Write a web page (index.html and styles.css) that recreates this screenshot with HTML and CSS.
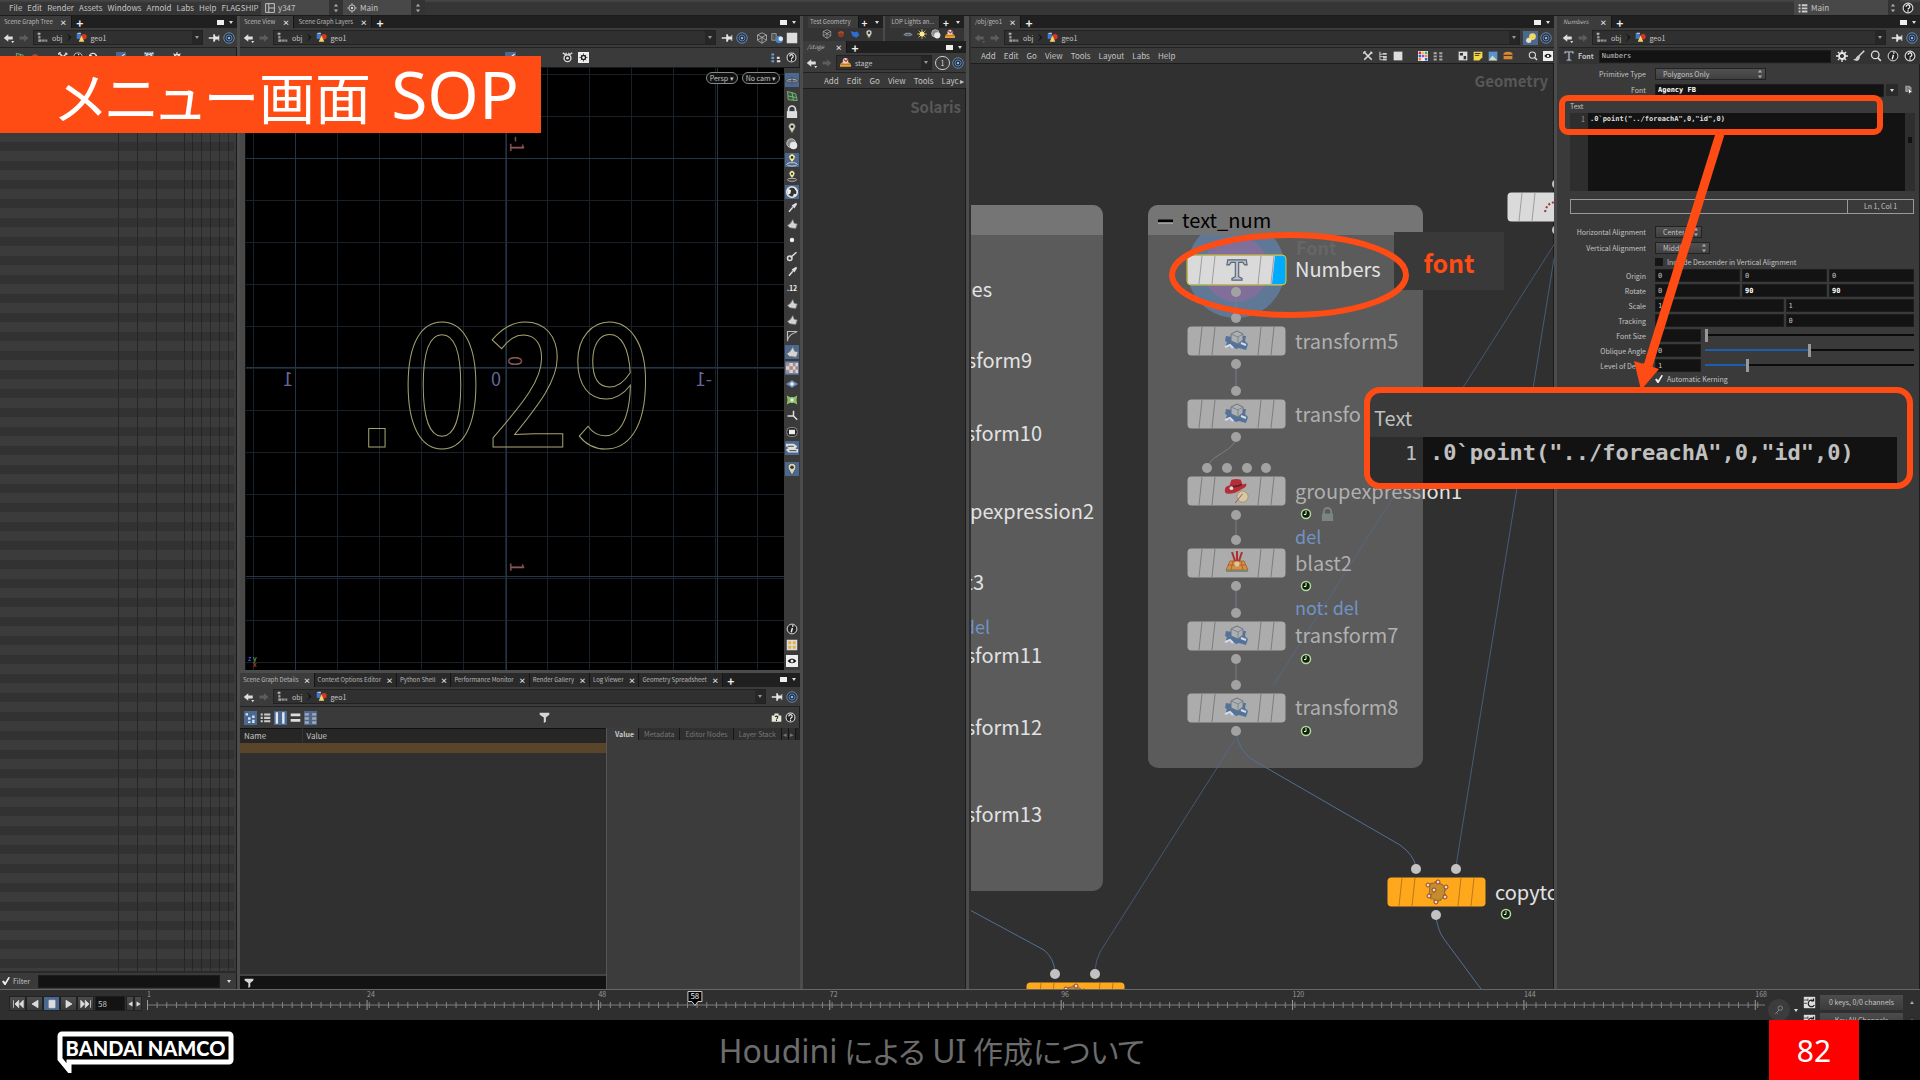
FILE: index.html
```html
<!DOCTYPE html>
<html lang="ja">
<head>
<meta charset="utf-8">
<title>メニュー画面 SOP</title>
<link rel="stylesheet" href="styles.css">
</head>
<body>
<svg class="defs" aria-hidden="true">
  <symbol id="back" viewBox="0 0 16 16"><path d="M1 8l6-5v3h6v4H7v3z" fill="currentColor"/><path d="M11 12h4l-2 3z" fill="currentColor"/></symbol>
  <symbol id="fwd" viewBox="0 0 16 16"><path d="M14 8L8 3v3H2v4h6v3z" fill="#5c5c5c"/></symbol>
  <symbol id="obj" viewBox="0 0 16 16"><path d="M1 1h4v3H1zM2 6h3v3H2zM2 11h4v3H2z" fill="#b8b8b8"/><path d="M7 11h4v3H7zM12 11h3v3h-3z" fill="#909090"/><path d="M3 4v8h9" stroke="#888" fill="none"/></symbol>
  <symbol id="geo" viewBox="0 0 16 16"><path d="M1 2h6v8H1z" fill="#3f78c8"/><path d="M1 2l2-1h4v2z" fill="#c8dcf5"/><circle cx="11.500" cy="7" r="4" fill="#d8371f"/><path d="M8 5l4 9H4z" fill="#f7d46a"/></symbol>
  <symbol id="pin" viewBox="0 0 16 16"><path d="M1 7h6V3h2l1 3h4V4h1v8h-1v-2h-4l-1 3H7V9H1z" fill="#e6e6e6"/></symbol>
  <symbol id="ring" viewBox="0 0 16 16"><circle cx="8" cy="8" r="7" fill="#26364a" stroke="#7f9cc0"/><circle cx="8" cy="8" r="4" fill="none" stroke="#6c93c4"/><circle cx="8" cy="8" r="1.500" fill="#a9c6ea"/></symbol>
  <symbol id="help" viewBox="0 0 16 16"><circle cx="8" cy="8" r="6.500" fill="#222" stroke="#ddd" stroke-width="1.500"/><path d="M5.500 6.500a2.500 2.500 0 1 1 3.500 2q-1 .5-1 1.500M8 11v2" fill="none" stroke="#eee" stroke-width="1.700"/></symbol>
  <symbol id="info" viewBox="0 0 16 16"><circle cx="8" cy="8" r="6.500" fill="#222" stroke="#ddd" stroke-width="1.300"/><path d="M9 3v2M8.500 6.500L7 12.500" stroke="#eee" stroke-width="2"/></symbol>
  <symbol id="mag" viewBox="0 0 16 16"><circle cx="7" cy="6.500" r="5" fill="none" stroke="#ddd" stroke-width="1.700"/><path d="M10.500 10.500l4 4" stroke="#ddd" stroke-width="2.200"/></symbol>
  <symbol id="gear" viewBox="0 0 16 16"><circle cx="8" cy="8" r="4" fill="none" stroke="#e8e8e8" stroke-width="2.500"/><path d="M8 0v4M8 12v4M0 8h4M12 8h4M2.500 2.500l2.500 2.500M11 11l2.500 2.500M13.500 2.500L11 5M5 11l-2.500 2.500" stroke="#e8e8e8" stroke-width="1.700"/></symbol>
  <symbol id="brush" viewBox="0 0 16 16"><path d="M15 1L8 8" stroke="#ddd" stroke-width="2"/><path d="M9 8q-2-2-4 1-1 3-5 4 6 3 8 0 2-3 1-5z" fill="#ccc"/></symbol>
  <symbol id="tee" viewBox="0 0 26 30"><path d="M2 3h22l1 6h-3l-2-3h-5v17l4 2v2H7v-2l4-2V6H6L4 9H1z" fill="#b4c0ce" stroke="#5a6472" stroke-width="1.300"/></symbol>
  <symbol id="xform" viewBox="0 0 28 22"><path d="M3 6l6 1 3-2 6 1 5 0-1 5 3 3-2 6-7-2-3 1-4-3-7 1 2-5-2-1z" fill="#54739c"/><path d="M2 17l5-2 3 3M18 13l5 2" stroke="#d7dde6" stroke-width="2" fill="none"/><path d="M8 4l6-3 6 3v6l-5 4-7-3z" fill="#aab0b4" stroke="#6b7278"/><path d="M8 4l7 3 5-3M15 7v7" stroke="#7f868c" fill="none"/></symbol>
  <symbol id="hat" viewBox="0 0 28 28"><circle cx="20" cy="20" r="6" fill="#d2c8aa" stroke="#b08c50"/><path d="M12 27l8-10" stroke="#b04a40"/><path d="M1 12q1-4 5-4l2-6q6-2 10 0l2 5 4-1q1 4-5 6-7 5-14 5-5 0-4-5z" fill="#b22f38"/><path d="M7 9q6 1 12-2" stroke="#6d1b22" stroke-width="2" fill="none"/><circle cx="8" cy="11" r="2" fill="#ddd"/></symbol>
  <symbol id="blast" viewBox="0 0 24 24"><path d="M5 11h14l4 9H1z" fill="#d4904a" stroke="#a8672c"/><path d="M1 20h22v2H1z" fill="#7c8774"/><path d="M3 15h18M8 11l-2 9M16 11l2 9" stroke="#a8672c"/><path d="M7 2l3 9M12 1v10M17 2l-3 9" stroke="#b03030" stroke-width="2"/><circle cx="12" cy="14" r="2.500" fill="#ddc89e"/></symbol>
  <symbol id="copy" viewBox="0 0 26 26"><path d="M6 5l8-2 7 5-1 10-7 5-8-6z" fill="#c58c2c" stroke="#8c6f42"/><path d="M3 6l10-4 9 6-1 10-8 6-9-6 7-5" stroke="#8c6f42" fill="none" stroke-dasharray="2 2"/><g fill="#e8e0d0" stroke="#a03a20"><circle cx="4" cy="6" r="2"/><circle cx="14" cy="3" r="2"/><circle cx="22" cy="8" r="2"/><circle cx="21" cy="18" r="2"/><circle cx="12" cy="23" r="2"/><circle cx="5" cy="17" r="2"/><circle cx="10" cy="11" r="2"/></g></symbol>
  <symbol id="clock" viewBox="0 0 12 12"><circle cx="6" cy="6" r="4.500" fill="#10200c" stroke="#b6d99c" stroke-width="1.500"/><path d="M6 3v3.500H4" stroke="#dfe" fill="none"/></symbol>
  <symbol id="lock" viewBox="0 0 14 16"><path d="M3 8V5a4 4 0 0 1 8 0v3" fill="none" stroke="currentColor" stroke-width="2"/><path d="M1 7h12v8H1z" fill="currentColor"/></symbol>
  <symbol id="funnel" viewBox="0 0 16 16"><path d="M1 1h14v3l-5 4v6l-3 2V8L1 4z" fill="#d6d6d6"/></symbol>
  <symbol id="ud" viewBox="0 0 8 14"><path d="M4 1l3 4H1zM4 13l3-4H1z" fill="#aaa"/></symbol>
  <symbol id="grid4" viewBox="0 0 16 16"><path d="M1 1h14v14H1z" fill="#ddd"/><path d="M3 3h4v4H3zM9 3h4v4H9zM3 9h4v4H3zM9 9h4v4H9z" fill="#e8b04c"/></symbol>
  <symbol id="eye" viewBox="0 0 16 16"><path d="M0 0h16v16H0z" fill="#eee"/><path d="M2 8q6-7 12 0-6 6-12 0z" fill="#111"/><circle cx="8" cy="8" r="2" fill="#eee"/></symbol>
  <symbol id="gearbox" viewBox="0 0 16 16"><path d="M0 0h16v16H0z" fill="#eee"/><circle cx="8" cy="8" r="3" fill="none" stroke="#222" stroke-width="2"/><path d="M8 2v3M8 11v3M2 8h3M11 8h3M4 4l2 2M10 10l2 2M12 4l-2 2M6 10l-2 2" stroke="#222"/></symbol>
  <symbol id="cam" viewBox="0 0 16 16"><path d="M1 1l4 3M15 1l-4 3M6 1v3M10 1v3" stroke="#ddd" stroke-width="2"/><circle cx="8" cy="9" r="5" fill="#222" stroke="#ddd" stroke-width="2"/><circle cx="8" cy="9" r="2" fill="#ddd"/></symbol>
  <symbol id="bulb" viewBox="0 0 16 16"><path d="M8 15l-4-7a4.500 4.500 0 1 1 8 0z" fill="#d8d8c0" stroke="#555"/><circle cx="8" cy="6" r="2" fill="#333"/></symbol>
  <symbol id="lamp" viewBox="0 0 16 16"><path d="M8 11L5 7a3.800 3.800 0 1 1 6 0z" fill="#eeeea0" stroke="#555"/><ellipse cx="8" cy="13" rx="6" ry="2" fill="none" stroke="#ddd"/><circle cx="8" cy="5" r="1.500" fill="#333"/></symbol>
  <symbol id="ball" viewBox="0 0 16 16"><circle cx="7" cy="7" r="6" fill="#888" stroke="#ddd"/><circle cx="10" cy="10" r="5" fill="#e8e8e8"/></symbol>
  <symbol id="redball" viewBox="0 0 16 16"><circle cx="8" cy="8" r="5" fill="#8c3a28"/><path d="M4 6q4-3 8 0" stroke="#c9704e" fill="none"/></symbol>
  <symbol id="bluegem" viewBox="0 0 16 16"><path d="M1 3l6 2 5-1 3 6-5 4-6-3z" fill="#2a6fd0"/></symbol>
  <symbol id="sphere" viewBox="0 0 16 16"><circle cx="8" cy="8" r="6" fill="#333" stroke="#ddd" stroke-width="2"/><path d="M3 4l4 2-1 4-3 1M10 2l2 4 3 1M9 14l1-4 4 1" fill="#eee"/></symbol>
  <symbol id="plane" viewBox="0 0 16 16"><path d="M0 9q8-7 16 0-8 5-16 0z" fill="#9aa8b8" stroke="#444"/><path d="M3 9h10M8 5v7" stroke="#334"/></symbol>
  <symbol id="mesh" viewBox="0 0 16 16"><path d="M2 2l11 3 2 9-12-1z" fill="#385c38" stroke="#8fc88f"/><path d="M3 8l10 2M8 3l2 11" stroke="#8fc88f"/></symbol>
  <symbol id="dot" viewBox="0 0 16 16"><circle cx="8" cy="8" r="3" fill="#eee"/></symbol>
  <symbol id="vec" viewBox="0 0 16 16"><path d="M14 3L6 10" stroke="#ddd" stroke-width="2"/><circle cx="5" cy="11" r="3" fill="none" stroke="#ddd" stroke-width="2"/></symbol>
  <symbol id="vec2" viewBox="0 0 16 16"><path d="M14 2L9 5l2 2zM9 7l-5 6" fill="#ddd" stroke="#ddd" stroke-width="2"/></symbol>
  <symbol id="poly" viewBox="0 0 16 16"><path d="M2 10l4-3 3-5 2 5 4 1-2 6-8-1z" fill="#d4d4d4" stroke="#777"/></symbol>
  <symbol id="curve" viewBox="0 0 16 16"><path d="M2 15V2h13M2 14q2-9 12-11" fill="none" stroke="#bbb" stroke-width="1.500"/></symbol>
  <symbol id="check" viewBox="0 0 16 16"><path d="M1 2h14v12H1z" fill="#d8d0d0"/><path d="M1 2h4v4H1zM9 2h3v4H9zM5 6h4v4H5zM12 6h3v4h-3zM1 10h4v4H1zM9 10h3v4H9z" fill="#a08c90"/></symbol>
  <symbol id="gem" viewBox="0 0 16 16"><path d="M0 8l8-5 8 5-8 5z" fill="#7391b8"/><path d="M5 8l3-3 3 3-3 3z" fill="#e3edf8"/></symbol>
  <symbol id="patch" viewBox="0 0 16 16"><path d="M1 2l4 2h6l4-2-1 6 1 6-4-2H5l-4 2 1-6z" fill="#8fbd62"/><path d="M6 6h4v4H6z" fill="#dfe9ff"/></symbol>
  <symbol id="axis" viewBox="0 0 16 16"><path d="M10 8V1M10 8l5 5M10 8H2" stroke="#ddd" stroke-width="2"/></symbol>
  <symbol id="badge" viewBox="0 0 16 16"><rect x="1" y="2" width="14" height="12" rx="5" fill="#222" stroke="#aaa"/><path d="M4 5h8v6H4z" fill="#eee"/></symbol>
  <symbol id="cyls" viewBox="0 0 16 16"><path d="M1 3h9l4 3-2 3h3v4H4l-3-3 3-2-3-2z" fill="#ddd"/><path d="M3 6h7M5 11h8" stroke="#333"/></symbol>
  <symbol id="cube" viewBox="0 0 16 16"><path d="M8 1l6 3v7l-6 4-6-4V4zM2 4l6 3 6-3M8 7v8M2 11l6-4 6 4" fill="none" stroke="#bbb"/></symbol>
  <symbol id="shade" viewBox="0 0 16 16"><path d="M1 2h6v9H1z" fill="#555" stroke="#aaa"/><circle cx="11" cy="10" r="5" fill="#4a82c4"/><circle cx="13" cy="9" r="3" fill="#e5edf7"/></symbol>
  <symbol id="page" viewBox="0 0 16 16"><path d="M1 1h14v14H1z" fill="#ddd"/></symbol>
  <symbol id="pick" viewBox="0 0 16 16"><path d="M2 1h7l3 3v7H2z" fill="#999"/><path d="M6 4l8 8-4 0-2 3z" fill="#fff" stroke="#333"/></symbol>
  <symbol id="links" viewBox="0 0 16 16"><path d="M2 2h4v3H2zM2 7h4v3H2zM2 12h4v3H2z" fill="#6d9bd2"/><path d="M10 7h4v3h-4zM10 12h5v3h-5z" fill="#ddd"/></symbol>
  <symbol id="tools" viewBox="0 0 16 16"><path d="M2 2l12 12M14 2L2 14" stroke="#ddd" stroke-width="2.500"/><path d="M0 4l4-4M12 1l3 3" stroke="#ddd" stroke-width="2"/></symbol>
  <symbol id="tree" viewBox="0 0 16 16"><path d="M3 1v13h5M3 5h5M3 9h5" stroke="#ccc" stroke-width="1.500" fill="none"/><path d="M8 3h6v3H8zM8 8h6v3H8zM8 12h6v3H8z" fill="#ccc"/></symbol>
  <symbol id="nodes" viewBox="0 0 16 16"><path d="M2 2h3v3H2zM5 7h3v3H5zM10 5h3v3h-3zM10 10h3v4h-3zM5 12h3v2H5z" fill="#d5e2f0"/></symbol>
  <symbol id="swatch" viewBox="0 0 16 16"><path d="M0 0h16v16H0z" fill="#eee"/><path d="M1 1h4v4H1z" fill="#c33"/><path d="M6 1h4v4H6z" fill="#e8c63c"/><path d="M11 1h4v4h-4z" fill="#4a7"/><path d="M1 6h4v4H1zM11 11h4v4h-4z" fill="#36c"/><path d="M6 6h4v4H6z" fill="#a4d"/><path d="M11 6h4v4h-4zM1 11h4v4H1z" fill="#e83"/></symbol>
  <symbol id="dots" viewBox="0 0 16 16"><path d="M1 2h5v3H1zM10 2h5v3h-5zM1 7h5v3H1zM10 7h5v3h-5zM1 12h5v3H1zM10 12h5v3h-5z" fill="#aaa"/></symbol>
  <symbol id="find" viewBox="0 0 16 16"><path d="M1 1h14v14H1z" fill="#ddd"/><path d="M3 3h5v4H3zM9 8h4v5H9z" fill="#333"/></symbol>
  <symbol id="case" viewBox="0 0 16 16"><path d="M1 5h4V2h6v3h4v9H1z" fill="#e8e8d8"/><path d="M6 7q2-2 4 0 0 2-2 3M8 11v2" stroke="#222" stroke-width="1.500" fill="none"/></symbol>
  <symbol id="note" viewBox="0 0 16 16"><path d="M1 1h14v9l-5 5H1z" fill="#f2d842"/><path d="M3 4h9M3 7h7" stroke="#333" stroke-width="1.500"/></symbol>
  <symbol id="lit" viewBox="0 0 16 16"><circle cx="10" cy="6" r="4.500" fill="#f4d95c"/><circle cx="5" cy="11" r="3.500" fill="#e8e0c0"/></symbol>
  <symbol id="pic" viewBox="0 0 16 16"><path d="M1 1h14v14H1z" fill="#5b93d0"/><path d="M1 15l6-8 8 8z" fill="#d8d8b0"/></symbol>
  <symbol id="box" viewBox="0 0 16 16"><path d="M1 3q7-4 14 0v10H1z" fill="#d48a38"/><path d="M1 7h14" stroke="#5a3513" stroke-width="2"/></symbol>
  <symbol id="sun" viewBox="0 0 16 16"><circle cx="8" cy="8" r="4" fill="#ffe98a"/><path d="M8 0v16M0 8h16M2.500 2.500l11 11M13.500 2.500l-11 11" stroke="#ffe98a"/></symbol>
  <symbol id="stage" viewBox="0 0 18 16"><path d="M4 7h10l4 4v4H0v-4z" fill="#e8a33c"/><path d="M0 11h18" stroke="#8a5510"/><circle cx="9" cy="5" r="4.500" fill="#ddd"/><path d="M6 3l4 3 3-4" stroke="#c33" stroke-width="2" fill="none"/></symbol>
  <symbol id="layout" viewBox="0 0 16 16"><path d="M1 1h14v14H1zM6 1v14M6 8h9" fill="none" stroke="#ccc" stroke-width="1.500"/></symbol>
  <symbol id="target" viewBox="0 0 16 16"><circle cx="8" cy="8" r="5" fill="none" stroke="#ccc" stroke-width="1.500"/><circle cx="8" cy="8" r="2" fill="#ccc"/><path d="M8 0v4M8 12v4M0 8h4M12 8h4" stroke="#ccc"/></symbol>
  <symbol id="list" viewBox="0 0 16 16"><path d="M1 2h3v3H1zM6 2h9v3H6zM1 7h3v3H1zM6 7h9v3H6zM1 12h3v3H1zM6 12h9v3H6z" fill="#ccc"/></symbol>
  <symbol id="cols" viewBox="0 0 16 16"><path d="M2 1h3v14H2zM10 1h3v14h-3z" fill="#dfe8f2"/></symbol>
  <symbol id="bars" viewBox="0 0 16 16"><path d="M1 2h14v4H1zM1 10h14v4H1z" fill="#ddd"/></symbol>
  <symbol id="key" viewBox="0 0 16 16"><circle cx="10" cy="5" r="3.500" fill="none" stroke="#888" stroke-width="1.500"/><path d="M8 8l-6 6M4 12l2 2" stroke="#888" stroke-width="1.500"/></symbol>
  <symbol id="keyset" viewBox="0 0 16 16"><path d="M1 1h14v14H1z" fill="#ddd"/><path d="M1 5h5M1 9h4M6 3v3" stroke="#333"/><path d="M13 6a4 4 0 1 0 1 5M13 3v3h-3" fill="none" stroke="#222" stroke-width="1.500"/></symbol>
  <symbol id="node" viewBox="0 0 99 30"><rect x=".5" y=".5" width="98" height="29" rx="4" fill="currentColor"/><path d="M15 1l-3 28M28 1l-3 28M74 1l-3 28M87 1l-3 28" stroke="#000" stroke-opacity=".28"/></symbol>
</svg>

<div class="slide">
  <header class="menubar">
    <nav class="menu" aria-label="Main menu"><button>File</button><button>Edit</button><button>Render</button><button>Assets</button><button>Windows</button><button>Arnold</button><button>Labs</button><button>Help</button><button>FLAGSHIP</button></nav>
    <button class="combo"><svg><use href="#layout"/></svg><span>y347</span><svg><use href="#ud"/></svg></button>
    <button class="combo"><svg><use href="#target"/></svg><span>Main</span><svg><use href="#ud"/></svg></button>
    <button class="combo combo-end"><svg><use href="#list"/></svg><span>Main</span><svg><use href="#ud"/></svg></button>
    <button class="ib" aria-label="Help"><svg><use href="#help"/></svg></button>
  </header>

  <main class="desk">
    <section class="pane">
      <div class="tabs"><button class="tab on">Scene Graph Tree<i>×</i></button><button class="add">+</button><span class="winctl"></span></div>
      <div class="path"><button class="ib" aria-label="Back"><svg><use href="#back"/></svg></button><button class="ib" aria-label="Forward"><svg><use href="#fwd"/></svg></button><div class="crumb"><svg><use href="#obj"/></svg><span>obj</span><b></b><svg><use href="#geo"/></svg><span>geo1</span><em></em></div><button class="ib" aria-label="Pin"><svg><use href="#pin"/></svg></button><button class="ib" aria-label="Link"><svg><use href="#ring"/></svg></button></div>
      <div class="treebar"><svg><use href="#mesh"/></svg><svg class="sep"><use href="#redball"/></svg><svg><use href="#tools"/></svg><svg><use href="#info"/></svg><svg class="sep"><use href="#sphere"/></svg><svg class="hot sep"><use href="#vec"/></svg><svg class="hot sep"><use href="#cam"/></svg><svg><use href="#gear"/></svg></div>
      <div class="tree"></div>
      <div class="filter"><input type="checkbox" id="filt" checked><label for="filt">Filter</label><input type="text" class="field" aria-label="Filter text"><em class="caret"></em></div>
    </section>

    <section class="pane">
      <div class="tabs"><button class="tab on">Scene View<i>×</i></button><button class="tab">Scene Graph Layers<i>×</i></button><button class="add">+</button><span class="winctl"></span></div>
      <div class="path"><button class="ib" aria-label="Back"><svg><use href="#back"/></svg></button><button class="ib" aria-label="Forward"><svg><use href="#fwd"/></svg></button><div class="crumb"><svg><use href="#obj"/></svg><span>obj</span><b></b><svg><use href="#geo"/></svg><span>geo1</span><em></em></div><button class="ib" aria-label="Pin"><svg><use href="#pin"/></svg></button><button class="ib gap" aria-label="Link"><svg><use href="#ring"/></svg></button><button class="ib" aria-label="Wireframe"><svg><use href="#cube"/></svg></button><button class="ib" aria-label="Shading"><svg><use href="#shade"/></svg></button><button class="ib" aria-label="Single view"><svg><use href="#page"/></svg></button></div>
      <div class="viewbar"><svg class="hot"><use href="#vec"/></svg><svg><use href="#cam"/></svg><svg><use href="#gearbox"/></svg><svg class="push"><use href="#links"/></svg><svg><use href="#help"/></svg></div>
      <div class="viewrow">
        <div class="viewport">
          <svg class="scene">
            <defs>
              <pattern id="fine" width="42" height="42" patternUnits="userSpaceOnUse" x="7" y="6"><path d="M.5 0v42M0 .5h42" stroke="#18202a" fill="none"/></pattern>
              <pattern id="coarse" width="211" height="209" patternUnits="userSpaceOnUse" x="49" y="90"><path d="M.5 0v209M0 .5h211" stroke="#263546" fill="none"/></pattern>
            </defs>
            <rect width="100%" height="100%" fill="url(#fine)"/>
            <rect width="100%" height="100%" fill="url(#coarse)"/>
            <g transform="translate(-246 -68)">
              <g class="wire"><text x="353" y="447" class="square">.</text><text x="399" y="447">0</text><text x="485" y="447">2</text><text x="569" y="447">9</text></g>
              <g class="ticks-x"><text x="491" y="386">0</text><text transform="translate(293 386) scale(-1 1)">1</text><text transform="translate(712 386) scale(-1 1)">-1</text></g>
              <g class="ticks-z"><text transform="translate(522 366) rotate(-90)">0</text><text transform="translate(510 562) rotate(90)">1</text><text transform="translate(510 136) rotate(90)">-1</text></g>
              <text x="248" y="661" class="gz">z</text><text x="253" y="661" class="gy">y</text><text x="253" y="667" class="gx">x</text>
            </g>
          </svg>
          <div class="pills"><button>Persp ▾</button><button>No cam ▾</button></div>
        </div>
        <div class="side">
          <svg class="hot"><use href="#plane"/></svg><svg><use href="#mesh"/></svg><svg class="white"><use href="#lock"/></svg><svg><use href="#bulb"/></svg><svg><use href="#ball"/></svg><svg class="hot"><use href="#lamp"/></svg><svg><use href="#lamp"/></svg><svg class="hot"><use href="#sphere"/></svg><svg><use href="#vec2"/></svg><svg><use href="#poly"/></svg><svg><use href="#dot"/></svg><svg><use href="#vec"/></svg><svg><use href="#vec2"/></svg><span>.12</span><svg><use href="#poly"/></svg><svg><use href="#poly"/></svg><svg><use href="#curve"/></svg><svg class="hot"><use href="#poly"/></svg><svg class="hot"><use href="#check"/></svg><svg><use href="#gem"/></svg><svg><use href="#patch"/></svg><svg><use href="#axis"/></svg><svg><use href="#badge"/></svg><svg class="hot"><use href="#cyls"/></svg><svg class="hot apart"><use href="#bulb"/></svg><svg class="end"><use href="#info"/></svg><svg><use href="#grid4"/></svg><svg><use href="#eye"/></svg>
        </div>
      </div>
      <div class="lower">
        <div class="tabs"><button class="tab on">Scene Graph Details<i>×</i></button><button class="tab">Context Options Editor<i>×</i></button><button class="tab">Python Shell<i>×</i></button><button class="tab">Performance Monitor<i>×</i></button><button class="tab">Render Gallery<i>×</i></button><button class="tab">Log Viewer<i>×</i></button><button class="tab">Geometry Spreadsheet<i>×</i></button><button class="add">+</button><span class="winctl"></span></div>
        <div class="path"><button class="ib" aria-label="Back"><svg><use href="#back"/></svg></button><button class="ib" aria-label="Forward"><svg><use href="#fwd"/></svg></button><div class="crumb"><svg><use href="#obj"/></svg><span>obj</span><b></b><svg><use href="#geo"/></svg><span>geo1</span><em></em></div><button class="ib" aria-label="Pin"><svg><use href="#pin"/></svg></button><button class="ib" aria-label="Link"><svg><use href="#ring"/></svg></button></div>
        <div class="detailbar"><svg class="hot"><use href="#nodes"/></svg><svg><use href="#list"/></svg><svg class="hot"><use href="#cols"/></svg><svg><use href="#bars"/></svg><svg class="hot"><use href="#dots"/></svg><svg class="mid"><use href="#funnel"/></svg><svg><use href="#case"/></svg><svg><use href="#help"/></svg></div>
        <div class="split">
          <div class="props">
            <table><thead><tr><th>Name</th><th>Value</th></tr></thead><tbody><tr><td></td><td></td></tr></tbody></table>
            <div class="search"><svg><use href="#funnel"/></svg><input type="text" aria-label="Search properties"></div>
          </div>
          <div class="values"><div class="subtabs"><button class="on">Value</button><button>Metadata</button><button>Editor Nodes</button><button>Layer Stack</button><button class="nav" aria-label="Previous">◂</button><button class="nav" aria-label="Next">▸</button></div></div>
        </div>
      </div>
    </section>

    <section class="pane dark">
      <div class="shelves">
        <div class="shelf"><div class="tabs"><button class="tab on">Test Geometry</button><button class="add">+</button><em class="caret"></em></div><div class="tools"><svg><use href="#cube"/></svg><svg><use href="#redball"/></svg><svg><use href="#bluegem"/></svg><svg><use href="#bulb"/></svg></div></div>
        <div class="shelf"><div class="tabs"><button class="tab on">LOP Lights an...</button><button class="add">+</button><em class="caret"></em></div><div class="tools"><svg><use href="#plane"/></svg><svg><use href="#sun"/></svg><svg><use href="#ball"/></svg><svg><use href="#stage"/></svg></div></div>
      </div>
      <div class="tabs"><button class="tab on it">/stage<i>×</i></button><button class="add">+</button><span class="winctl"></span></div>
      <div class="path"><button class="ib" aria-label="Back"><svg><use href="#back"/></svg></button><button class="ib" aria-label="Forward"><svg><use href="#fwd"/></svg></button><div class="crumb"><svg><use href="#stage"/></svg><span>stage</span><em></em></div><button class="ib one">1</button><button class="ib" aria-label="Link"><svg><use href="#ring"/></svg></button></div>
      <div class="netmenu wide"><button>Add</button><button>Edit</button><button>Go</button><button>View</button><button>Tools</button><button>Layc ▸</button></div>
      <div class="mark">Solaris</div>
    </section>

    <section class="pane dark inset">
      <div class="tabs"><button class="tab on">/obj/geo1<i>×</i></button><button class="add">+</button><span class="winctl"></span></div>
      <div class="path"><button class="ib off" aria-label="Back"><svg><use href="#back"/></svg></button><button class="ib" aria-label="Forward"><svg><use href="#fwd"/></svg></button><div class="crumb"><svg><use href="#obj"/></svg><span>obj</span><b></b><svg><use href="#geo"/></svg><span>geo1</span><em></em></div><button class="ib hot" aria-label="Hints"><svg><use href="#lit"/></svg></button><button class="ib" aria-label="Link"><svg><use href="#ring"/></svg></button></div>
      <div class="netmenu"><button>Add</button><button>Edit</button><button>Go</button><button>View</button><button>Tools</button><button>Layout</button><button>Labs</button><button>Help</button>
        <span class="icons"><svg><use href="#tools"/></svg><svg><use href="#tree"/></svg><svg class="sep"><use href="#page"/></svg><svg><use href="#swatch"/></svg><svg class="sep"><use href="#dots"/></svg><svg><use href="#find"/></svg><svg><use href="#note"/></svg><svg><use href="#pic"/></svg><svg class="sep"><use href="#box"/></svg><svg><use href="#mag"/></svg><svg><use href="#eye"/></svg></span></div>
      <svg class="canvas">
        <g transform="translate(-971 -64)">
          <text class="zone" x="1548" y="87" text-anchor="end">Geometry</text>
          <path d="M900 205h193a10 10 0 0 1 10 10v666a10 10 0 0 1-10 10H900z" fill="#5b5b5b"/>
          <path d="M900 205h193a10 10 0 0 1 10 10v20H900z" fill="#757575"/>
          <rect x="1148" y="205" width="275" height="563" rx="10" fill="#5b5b5b"/>
          <circle cx="1236" cy="269" r="49" fill="#5f7896"/><circle cx="1236" cy="269" r="33" fill="#806f9a"/>
          <path d="M1148 235v-20a10 10 0 0 1 10-10h255a10 10 0 0 1 10 10v20z" fill="#757575"/>
          <path d="M1158 221h15" stroke="#000" stroke-width="3"/><path d="M1158 223h15" stroke="#ccc"/>
          <text x="1182" y="228" class="head">text_num</text>
          <g class="names" text-anchor="end"><text x="992" y="297">es</text><text x="1032" y="368">sform9</text><text x="1042" y="441">sform10</text><text x="1094" y="519">pexpression2</text><text x="984" y="590">t3</text><text x="990" y="634" class="tag">del</text><text x="1042" y="663">sform11</text><text x="1042" y="735">sform12</text><text x="1042" y="822">sform13</text></g>
          <g fill="none" stroke="#536f96">
            <path d="M1557 240L1273 686M1236 738L1100 952q-4 8-5 18" stroke-opacity=".65"/>
            <path d="M1557 240L1456 866" stroke-opacity=".7"/>
            <path d="M1236 731q2 22 22 32l142 82q14 10 16 22M968 909l76 41q10 8 11 22M1436 917q2 14 8 22l37 50"/>
            <path d="M1236 292v26M1236 364v26M1236 437q0 8-14 16-14 8-15 15M1236 515v25M1236 586v27M1236 659v26" stroke="#77808c"/>
          </g>
          <g class="pins"><circle cx="1236" cy="292" r="5"/><circle cx="1236" cy="318" r="5"/><circle cx="1236" cy="364" r="5"/><circle cx="1236" cy="391" r="5"/><circle cx="1236" cy="437" r="5"/><circle cx="1207" cy="468" r="5"/><circle cx="1227" cy="468" r="5"/><circle cx="1247" cy="468" r="5"/><circle cx="1266" cy="468" r="5"/><circle cx="1236" cy="515" r="5"/><circle cx="1236" cy="540" r="5"/><circle cx="1236" cy="586" r="5"/><circle cx="1236" cy="613" r="5"/><circle cx="1236" cy="659" r="5"/><circle cx="1236" cy="685" r="5"/><circle cx="1236" cy="731" r="5"/></g>
          <g class="pins lit"><circle cx="1416" cy="869" r="5"/><circle cx="1456" cy="869" r="5"/><circle cx="1436" cy="915" r="5"/><circle cx="1055" cy="974" r="5"/><circle cx="1095" cy="974" r="5"/><circle cx="1557" cy="184" r="5"/><circle cx="1557" cy="230" r="5"/></g>
          <g class="pale"><use href="#node" x="1187" y="255" width="99" height="30"/><use href="#node" x="1507" y="192" width="99" height="30"/></g>
          <path d="M1275 256h8q3 0 3 3v22q0 3-3 3h-11z" fill="#00aaff"/>
          <rect x="1187" y="255" width="99" height="30" rx="4" fill="none" stroke="#d8c828"/>
          <path d="M1545 212q2-10 12-10" fill="none" stroke="#a33" stroke-dasharray="2 2" stroke-width="2"/>
          <g class="grey"><use href="#node" x="1187" y="326" width="99" height="30"/><use href="#node" x="1187" y="399" width="99" height="30"/><use href="#node" x="1187" y="476" width="99" height="30"/><use href="#node" x="1187" y="548" width="99" height="30"/><use href="#node" x="1187" y="621" width="99" height="30"/><use href="#node" x="1187" y="693" width="99" height="30"/></g>
          <g class="orange"><use href="#node" x="1387" y="877" width="99" height="30"/><use href="#node" x="1026" y="982" width="99" height="30"/></g>
          <use href="#tee" x="1226" y="257" width="22" height="26"/>
          <use href="#xform" x="1223" y="330" width="28" height="22"/><use href="#xform" x="1223" y="403" width="28" height="22"/><use href="#hat" x="1223" y="478" width="28" height="26"/><use href="#blast" x="1225" y="550" width="24" height="24"/><use href="#xform" x="1223" y="625" width="28" height="22"/><use href="#xform" x="1223" y="697" width="28" height="22"/>
          <use href="#copy" x="1424" y="879" width="26" height="26"/><use href="#copy" x="1062" y="983" width="26" height="26"/>
          <text x="1296" y="255" class="ghost">Font</text>
          <g class="names"><text x="1295" y="277">Numbers</text><text x="1495" y="900">copytc</text></g>
          <g class="names dim"><text x="1295" y="349">transform5</text><text x="1295" y="422">transfo</text><text x="1295" y="499">groupexpress<tspan class="over">ion1</tspan></text><text x="1295" y="544" class="tag">del</text><text x="1295" y="571">blast2</text><text x="1295" y="615" class="tag">not: del</text><text x="1295" y="643">transform7</text><text x="1295" y="715">transform8</text></g>
          <use href="#clock" x="1300" y="508" width="12" height="12"/><use href="#clock" x="1300" y="580" width="12" height="12"/><use href="#clock" x="1300" y="653" width="12" height="12"/><use href="#clock" x="1300" y="725" width="12" height="12"/><use href="#clock" x="1500" y="908" width="12" height="12"/>
          <use href="#lock" x="1321" y="507" width="13" height="15" color="#7c8583"/>
        </g>
      </svg>
    </section>

    <section class="pane inset">
      <div class="tabs"><button class="tab on it">Numbers<i>×</i></button><button class="add">+</button><span class="winctl"></span></div>
      <div class="path"><button class="ib" aria-label="Back"><svg><use href="#back"/></svg></button><button class="ib" aria-label="Forward"><svg><use href="#fwd"/></svg></button><div class="crumb"><svg><use href="#obj"/></svg><span>obj</span><b></b><svg><use href="#geo"/></svg><span>geo1</span><em></em></div><button class="ib" aria-label="Pin"><svg><use href="#pin"/></svg></button><button class="ib" aria-label="Link"><svg><use href="#ring"/></svg></button></div>
      <div class="opbar"><svg><use href="#tee"/></svg><label for="op">Font</label><input id="op" class="field mono" value="Numbers"><svg><use href="#gear"/></svg><svg><use href="#brush"/></svg><svg><use href="#mag"/></svg><svg><use href="#info"/></svg><svg><use href="#help"/></svg></div>
      <form class="params">
        <div class="row tall"><label for="prim">Primitive Type</label><div class="pick w3"><select id="prim"><option>Polygons Only</option></select><svg><use href="#ud"/></svg></div></div>
        <div class="row tall"><label for="fnt">Font</label><div class="ctl"><input id="fnt" class="field mono strong" value="Agency FB"><em class="caret boxed"></em><svg><use href="#pick"/></svg></div></div>
        <label class="textlabel" for="code">Text</label>
        <div class="editor"><span>1</span><textarea id="code" spellcheck="false">.0`point("../foreachA",0,"id",0)</textarea><i class="bar"></i></div>
        <div class="status"><span></span><span>Ln 1, Col 1</span></div>
        <div class="row tall"><label for="ha">Horizontal Alignment</label><div class="pick w1"><select id="ha"><option>Center</option></select><svg><use href="#ud"/></svg></div></div>
        <div class="row tall"><label for="va">Vertical Alignment</label><div class="pick w2"><select id="va"><option>Middle</option></select><svg><use href="#ud"/></svg></div></div>
        <div class="row low"><span></span><div class="tick"><input type="checkbox" id="desc"><label for="desc">Include Descender in Vertical Alignment</label></div></div>
        <div class="row"><label for="ox">Origin</label><div class="ctl"><input id="ox" class="field mono" value="0"><input class="field mono" aria-label="Origin y" value="0"><input class="field mono" aria-label="Origin z" value="0"></div></div>
        <div class="row"><label for="rx">Rotate</label><div class="ctl"><input id="rx" class="field mono" value="0"><input class="field mono strong" aria-label="Rotate y" value="90"><input class="field mono strong" aria-label="Rotate z" value="90"></div></div>
        <div class="row"><label for="sx">Scale</label><div class="ctl"><input id="sx" class="field mono" value="1"><input class="field mono" aria-label="Scale y" value="1"></div></div>
        <div class="row"><label for="tx">Tracking</label><div class="ctl"><input id="tx" class="field mono" value=""><input class="field mono" aria-label="Tracking y" value="0"></div></div>
        <div class="row"><label for="fs">Font Size</label><div class="ctl"><input id="fs" class="field mono short" value=""><input type="range" aria-label="Font Size slider" value="0" style="--v:0%"></div></div>
        <div class="row"><label for="ob">Oblique Angle</label><div class="ctl"><input id="ob" class="field mono short" value="0"><input type="range" aria-label="Oblique Angle slider" value="50" style="--v:50%"></div></div>
        <div class="row"><label for="ld">Level of Detail</label><div class="ctl"><input id="ld" class="field mono short" value="1"><input type="range" aria-label="Level of Detail slider" value="20" style="--v:20%"></div></div>
        <div class="row low"><span></span><div class="tick"><input type="checkbox" id="kern" checked><label for="kern">Automatic Kerning</label></div></div>
      </form>
    </section>
  </main>

  <section class="timeline" aria-label="Timeline">
    <div class="play"><button aria-label="First"><svg viewBox="0 0 16 16"><path d="M2 3v10M9 3L4 8l5 5zM15 3l-5 5 5 5z"/></svg></button><button aria-label="Reverse"><svg viewBox="0 0 16 16"><path d="M12 3L4 8l8 5z"/></svg></button><button class="hot" aria-label="Stop"><svg viewBox="0 0 16 16"><path d="M4 3h8v10H4z"/></svg></button><button aria-label="Play"><svg viewBox="0 0 16 16"><path d="M4 3l8 5-8 5z"/></svg></button><button aria-label="Last"><svg viewBox="0 0 16 16"><path d="M1 3l5 5-5 5zM7 3l5 5-5 5zM14 3v10"/></svg></button><input class="field" aria-label="Frame" value="58"><button class="step" aria-label="Previous frame"><svg viewBox="0 0 16 16"><path d="M12 3L4 8l8 5z"/></svg></button><button class="step" aria-label="Next frame"><svg viewBox="0 0 16 16"><path d="M4 3l8 5-8 5z"/></svg></button></div>
    <svg class="ruler">
      <line x1="0" x2="100%" y1="15" y2="15" stroke="#7c7c7c"/>
      <line x1="0" x2="100%" y1="15" y2="15" stroke="#858585" stroke-width="6" pathLength="1678" stroke-dasharray="1 9"/>
      <g stroke="#9a9a9a"><path d="M.5 10v10"/><line x1="13.600%" x2="13.600%" y1="10" y2="20"/><line x1="27.900%" x2="27.900%" y1="10" y2="20"/><line x1="42.200%" x2="42.200%" y1="10" y2="20"/><line x1="56.500%" x2="56.500%" y1="10" y2="20"/><line x1="70.800%" x2="70.800%" y1="10" y2="20"/><line x1="85.100%" x2="85.100%" y1="10" y2="20"/><line x1="99.400%" x2="99.400%" y1="10" y2="20"/></g>
      <text x="0" y="7">1</text><text x="13.600%" y="7">24</text><text x="27.900%" y="7">48</text><text x="42.200%" y="7">72</text><text x="56.500%" y="7">96</text><text x="70.800%" y="7">120</text><text x="85.100%" y="7">144</text><text x="99.400%" y="7">168</text>
      <svg x="33.400%" class="head58"><path d="M.5 1.500h14v10h-4l-3 4-3-4h-4z" fill="#000" stroke="#ccc"/><text x="3" y="9" class="now">58</text></svg>
    </svg>
    <button class="keybtn" aria-label="Set key"><svg><use href="#key"/></svg></button><em class="caret"></em>
    <div class="keys"><svg><use href="#keyset"/></svg><button>0 keys, 0/0 channels</button><em class="caret up"></em><svg><use href="#keyset"/></svg><button>Key All Channels</button><em class="caret up"></em></div>
  </section>

  <footer class="foot">
    <div class="logo"><svg viewBox="0 0 177 42"><path d="M5 3h167a2 2 0 0 1 2 2v24a2 2 0 0 1-2 2H12v8L3 28V5a2 2 0 0 1 2-2z" fill="none" stroke="#fff" stroke-width="5"/></svg><span>BANDAI NAMCO</span></div>
    <p class="deck"><span>Houdini</span> による <span>UI</span> 作成について</p>
    <div class="num">82</div>
  </footer>

  <h1 class="title">メニュー画面<span>SOP</span></h1>
  <div class="tip">font</div>
  <div class="zoom"><div class="zlabel">Text</div><div class="zcode"><span>1</span><code>.0`point("../foreachA",0,"id",0)</code></div></div>
  <svg class="notes" viewBox="0 0 1920 1080">
    <g fill="none" stroke="#ff4b14"><ellipse cx="1289" cy="275" rx="117" ry="40" stroke-width="6"/><rect x="1562" y="98" width="318" height="34" rx="6" stroke-width="6"/><path d="M1720 134L1648 366" stroke-width="9"/></g>
    <path d="M1634 361l25 8-18 21z" fill="#ff4b14"/>
  </svg>
</div>
</body>
</html>
```
FILE: styles.css
```css
* { box-sizing: border-box; }
html, body { margin: 0; height: 100%; }
body { background: #000; color: #c4c4c4; font: 7px/10px "Noto Sans CJK JP", "Noto Sans", sans-serif; overflow: hidden; }
button, input, select, textarea { font: inherit; color: inherit; background: none; border: 0; padding: 0; margin: 0; border-radius: 0; outline: 0; }
svg { display: block; flex: none; width: 10px; height: 10px; overflow: hidden; }
.defs { position: absolute; width: 0; height: 0; }
.slide { position: relative; min-height: 100vh; display: flex; flex-direction: column; }
.hot { background: #4a6890; }
.white { color: #ddd; }

.menubar { height: 16px; display: flex; align-items: center; background: linear-gradient(#484848, #353535 3px, #363636); border-bottom: 1px solid #1c1c1c; padding: 0 5px 0 9px; }
.menu { display: flex; gap: 5px; font-size: 8px; width: 252px; white-space: nowrap; }
.combo { display: flex; align-items: center; gap: 3px; width: 82px; height: 15px; padding: 0 4px; font-size: 8px; background: linear-gradient(90deg, #484848 68px, #333 68px); }
.combo span { flex: 1; text-align: left; }
.combo svg:last-child { width: 6px; }
.combo-end { margin-left: auto; width: 106px; background: linear-gradient(90deg, #484848 94px, #333 94px); }

.desk { flex: 1; display: grid; grid-template-columns: 240fr 563fr 166fr 588fr 363fr; min-height: 0; }
.pane { display: flex; flex-direction: column; min-width: 0; min-height: 0; background: #3a3a3a; border-right: 3px solid #4c4c4c; box-shadow: inset -1px 0 #1c1c1c; }
.pane:last-child { border-right: 0; }
.dark { background: #303030; }
.inset { padding-left: 2px; }

.tabs { display: flex; align-items: stretch; height: 12px; background: #202020; }
.tab { display: flex; align-items: center; gap: 7px; padding: 0 4px; font-size: 6px; color: #b8b8b8; background: #2a2a2a; border-right: 1px solid #151515; white-space: nowrap; }
.tab i { font-style: normal; font-weight: 700; font-size: 7px; color: #eee; }
.tab.on { background: #3c3c3c; }
.tab.it { font-style: italic; gap: 11px; }
.add { width: 16px; font-size: 12px; line-height: 11px; font-weight: 700; color: #eee; }
.winctl { margin-left: auto; width: 22px; background: linear-gradient(#eee, #eee) 2px 4px / 7px 5px no-repeat; position: relative; }
.winctl::after, .caret::after, .crumb em::after { content: ""; display: block; border: 2px solid transparent; border-top: 3px solid #ddd; border-bottom: 0; width: 0; }
.winctl::after { margin: 5px 0 0 14px; }
.caret { width: 12px; display: grid; place-items: center; }
.caret.up::after { border-top: 0; border-bottom: 3px solid #aaa; }

.path { display: flex; align-items: center; height: 20px; padding: 0 1px; background: #3b3b3b; border-bottom: 1px solid #222; }
.ib { flex: none; width: 15px; height: 14px; display: grid; place-items: center; color: #ddd; }
.ib svg { width: 12px; height: 12px; }
.ib.off { color: #5c5c5c; }
.ib.gap { margin-right: 5px; }
.one { border: 1px solid #ccc; border-radius: 8px; }
.crumb { flex: 1; display: flex; align-items: center; gap: 4px; height: 15px; margin: 0 3px 0 2px; padding-left: 3px; background: #303030; border: 1px solid #222; }
.crumb svg { width: 11px; height: 11px; }
.crumb b { width: 5px; height: 9px; clip-path: polygon(0 0, 100% 50%, 0 100%, 60% 50%); background: #111; }
.crumb em { margin-left: auto; width: 10px; height: 13px; display: grid; place-items: center; background: #262626; }
.crumb em::after { border-top-color: #999; }

.treebar { height: 84px; display: flex; gap: 5px; padding: 4px 15px; }
.treebar .sep { margin-right: 13px; }
.tree { flex: 1; margin-right: 3px; background:
  repeating-linear-gradient(90deg, transparent 0 8px, rgba(0,0,0,.28) 8px 9px) 184px 0 / 54px 100% no-repeat,
  linear-gradient(90deg, transparent 118px, #262626 118px 119px, transparent 119px 137px, #262626 137px 138px, transparent 138px 156px, #262626 156px 157px, transparent 157px 184px, #262626 184px 185px, transparent 185px),
  repeating-linear-gradient(#3b3b3b 0 10px, #323232 10px 19px); }
.filter { display: flex; align-items: center; height: 18px; padding: 0 2px; gap: 3px; border-top: 2px solid #2a2a2a; }
.filter label { width: 22px; }
.field { flex: 1; min-width: 0; background: #131313; height: 13px; padding: 0 2px; border: 1px solid #1d1d1d; }
input[type=checkbox] { appearance: none; width: 8px; height: 8px; background: #151515; flex: none; }
input[type=checkbox]:checked { background: #eee; clip-path: polygon(0 55%, 20% 45%, 40% 65%, 80% 0, 100% 5%, 45% 100%, 30% 100%); }

.viewbar { height: 20px; display: flex; align-items: center; gap: 5px; padding: 0 3px 0 265px; border-bottom: 1px solid #1a1a1a; }
.viewbar svg { width: 11px; height: 11px; }
.viewbar .hot { margin-right: 41px; }
.viewbar .push { margin-left: auto; }
.viewrow { flex: 604 1 0; display: flex; min-height: 0; padding-left: 6px; background: linear-gradient(90deg, #484848 5px, #111 5px); }
.viewport { flex: 1; position: relative; background: #000; min-width: 0; }
.scene { width: 100%; height: 100%; position: absolute; inset: 0; }
.wire { font: 172px "Noto Sans CJK JP", sans-serif; font-feature-settings: "hwid"; fill: none; stroke: #a3a070; }
.square { font-family: "Liberation Sans", sans-serif; }
.ticks-x, .ticks-z { font-size: 18px; }
.ticks-x { fill: #66669a; }
.ticks-z { fill: #8c5656; }
.gz { fill: #66f; } .gy { fill: #6c6; } .gx { fill: #e44; }
.pills { position: absolute; top: 4px; right: 4px; display: flex; gap: 4px; }
.pills button { border: 1px solid #888; border-radius: 7px; height: 12px; line-height: 9px; padding: 0 3px; background: #111; white-space: nowrap; }
.side { width: 16px; padding: 5px 1px 2px; display: flex; flex-direction: column; align-items: center; gap: 2px; background: #3a3a3a; }
.side svg { width: 12px; height: 14px; }
.side svg.hot { width: 14px; }
.side .apart { margin-top: 5px; }
.side .end { margin-top: auto; }
.side span { color: #eee; font-weight: 700; height: 14px; line-height: 14px; }

.lower { flex: 317 1 0; display: flex; flex-direction: column; min-height: 0; border-top: 3px solid #4c4c4c; }
.lower .tabs { height: 14px; }
.lower .tab { gap: 5px; padding: 0 3px; }
.detailbar { height: 21px; display: flex; align-items: center; gap: 3px; padding: 0 4px; }
.detailbar svg { width: 11px; height: 11px; }
.detailbar .hot { width: 13px; height: 14px; }
.detailbar .mid { margin: 0 auto; }
.split { flex: 1; display: flex; min-height: 0; }
.props { flex: 366 1 0; display: flex; flex-direction: column; background: #303030; border-right: 1px solid #555; }
.props table { width: 100%; border-collapse: collapse; font-size: 8px; }
.props th { height: 14px; padding: 0 4px; text-align: left; font-weight: 400; background: #262626; border-top: 1px solid #111; }
.props th:first-child { width: 62px; border-right: 1px solid #333; }
.props td { height: 10px; padding: 0; background: #58452a; }
.search { margin-top: auto; height: 15px; display: flex; align-items: center; padding: 0 4px; background: #131313; border-top: 2px solid #444; }
.search input { flex: 1; }
.values { flex: 189 1 0; padding-left: 4px; background: #3c3c3c; min-width: 0; overflow: hidden; }
.subtabs { display: flex; height: 12px; background: #262626; }
.subtabs button { padding: 0 5px; color: #777; border-right: 1px solid #151515; background: #303030; white-space: nowrap; }
.subtabs .nav { padding: 0 1px; }
.subtabs .on { padding: 0 4px; color: #ccc; font-weight: 700; background: #3c3c3c; }

.shelves { display: flex; height: 25px; background: #343434; }
.shelf { flex: 1; min-width: 0; border-right: 2px solid #4a4a4a; padding-left: 5px; }
.shelf .tab { flex: 1; padding: 0 2px; }
.shelf .add { width: 12px; font-size: 10px; }
.tools { display: flex; justify-content: flex-end; gap: 4px; padding: 1px 9px 0 0; }
.netmenu { display: flex; align-items: center; gap: 8px; height: 16px; font-size: 8px; padding: 0 1px 0 10px; background: #393939; border-bottom: 1px solid #1c1c1c; white-space: nowrap; }
.wide { padding-left: 21px; }
.icons { margin-left: auto; display: flex; gap: 5px; }
.icons .sep { margin-right: 10px; }
.mark { padding: 10px 5px; text-align: right; font: 700 15px/16px "Noto Sans CJK JP", sans-serif; color: #575757; }
.canvas { flex: 1; width: 100%; min-height: 0; }
.zone { font: 700 15px "Noto Sans CJK JP", sans-serif; fill: #575757; }
.head { font-size: 20px; fill: #000; }
.names { font-size: 20px; fill: #e2e2e2; }
.dim { fill: #b0b0b0; }
.names .tag { fill: #7193c4; font-size: 18px; }
.names .over { fill: #e2e2e2; }
.ghost { font: 700 18px "Noto Sans CJK JP", sans-serif; fill: #666; }
.pins { fill: #a2a2a2; }
.lit { fill: #c2c2c2; }
.pale { color: #dadada; }
.grey { color: #acacac; }
.orange { color: #ffa81c; }

.opbar { height: 16px; display: flex; align-items: center; gap: 5px; padding: 0 4px; background: #333; }
.opbar svg { width: 12px; height: 12px; }
.opbar label { font-weight: 700; margin-left: -2px; }
.mono { font-family: "DejaVu Sans Mono", monospace; }
.strong { font-weight: 700; color: #fff; }
.params { padding: 2px 6px 0 11px; }
.row { display: grid; grid-template-columns: 76px minmax(0, 1fr); gap: 9px; align-items: center; height: 15px; }
.row.tall { height: 16px; }
.row.low { height: 12px; }
.row > label { text-align: right; white-space: nowrap; }
.ctl { display: flex; align-items: center; gap: 2px; min-width: 0; }
.ctl .field { width: 0; }
.ctl .short { flex: none; width: 46px; margin-right: 2px; }
.boxed { height: 12px; background: #2a2a2a; margin: 0 4px 0 0; }
.pick { display: flex; align-items: center; height: 12px; background: linear-gradient(#505050, #404040); border: 1px solid #222; }
.pick svg { width: 6px; margin: 0 2px; }
.pick select { appearance: none; flex: 1; min-width: 0; padding: 0 7px; height: 10px; }
.w1 { width: 47px; } .w2 { width: 55px; } .w3 { width: 111px; }
.tick { display: flex; align-items: center; gap: 4px; white-space: nowrap; }
.textlabel { display: block; margin-top: 3px; height: 12px; }
.editor { display: flex; height: 78px; background: #2e2e2e; margin-right: -1px; }
.editor span { width: 18px; text-align: right; padding: 1px 3px 0 0; color: #999; }
.editor textarea { flex: 1; resize: none; overflow: hidden; background: #131313; color: #ddd; padding: 1px 2px; font: 700 7px/10px "DejaVu Sans Mono", monospace; }
.editor .bar { width: 10px; background: linear-gradient(#111, #111) 3px 24px / 4px 6px no-repeat #2e2e2e; }
.status { display: flex; height: 15px; margin: 8px 0 10px; border: 1px solid #999; line-height: 12px; text-align: center; }
.status span:first-child { flex: 1; border-right: 1px solid #999; }
.status span:last-child { width: 65px; }
input[type=range] { appearance: none; flex: 1; min-width: 0; width: 0; height: 13px; background: linear-gradient(90deg, #1d5fae var(--v), #0c0c0c var(--v)) 0 5px / 100% 2px no-repeat; }
input[type=range]::-webkit-slider-thumb { appearance: none; width: 3px; height: 13px; background: #999; border: 0; }

.timeline { display: flex; height: 31px; background: #2f2f2f; border-top: 1px solid #666; overflow: hidden; }
.play { display: flex; width: 147px; padding: 6px 5px 9px 9px; }
.play button { width: 17px; background: linear-gradient(#4c4c4c, #3a3a3a); border: 1px solid #222; display: grid; place-items: center; }
.play .hot { background: #4a6890; }
.play svg { fill: #ddd; stroke: #ddd; width: 12px; height: 12px; }
.play .field { height: 15px; margin: 0 1px; font-size: 8px; }
.play .step { width: 8px; }
.play .step svg { width: 7px; }
.ruler { flex: 1; height: 30px; overflow: visible; }
.ruler text { fill: #999; font-size: 7px; }
.ruler .head58 { width: 18px; height: 18px; overflow: visible; }
.ruler .now { fill: #eee; font-size: 8px; }
.keybtn { flex: none; width: 22px; height: 22px; margin: 9px 0 0 3px; border-radius: 11px; background: #3c3c3c; display: grid; place-items: center; }
.timeline > .caret { flex: none; height: 12px; margin-top: 14px; }
.keys { display: grid; grid-template-columns: 14px 83px 12px; grid-auto-rows: 16px; row-gap: 2px; column-gap: 3px; padding: 4px 2px 0 1px; width: 118px; flex: none; align-items: center; }
.keys svg { width: 13px; height: 13px; }
.keys button { height: 15px; background: linear-gradient(#4c4c4c, #3c3c3c); white-space: nowrap; }

.foot { position: relative; z-index: 1; height: 60px; display: grid; grid-template-columns: 1fr auto 1fr; background: #000; }
.logo { position: relative; margin: 11px 0 0 57px; width: 177px; height: 42px; }
.logo svg { position: absolute; inset: 0; width: 177px; height: 42px; }
.logo span { position: relative; display: block; text-align: center; font: 900 20px/34px Lato, sans-serif; color: #fff; white-space: nowrap; }
.deck { margin: 0; padding-right: 56px; color: #6c6c6c; font-size: 30px; line-height: 60px; font-feature-settings: "palt"; white-space: nowrap; }
.deck span { font: 32px "Noto Sans", sans-serif; }
.num { justify-self: end; width: 90px; margin-right: 61px; background: #f00; color: #fff; text-align: center; font: 30px/62px "Noto Sans", sans-serif; }

.title { position: absolute; z-index: 2; left: 0; top: 56px; width: 541px; height: 77px; margin: 0; padding-left: 56px; background: #ff4b14; color: #fff; font-weight: 400; font-size: 56px; line-height: 75px; font-feature-settings: "palt"; white-space: nowrap; }
.title span { margin-left: 20px; font: 66px/75px "Noto Sans", sans-serif; }
.tip { position: absolute; left: 1394px; top: 232px; width: 110px; height: 58px; background: #393939; color: #ff4b14; text-align: center; font: 700 25px/60px "Noto Sans CJK JP", sans-serif; }
.zoom { position: absolute; left: 1364px; top: 387px; width: 549px; height: 102px; border: 6px solid #ff4b14; border-radius: 16px; background: #3a3a3a; overflow: hidden; color: #c0c0c0; }
.zlabel { height: 44px; padding-left: 4px; font-size: 20px; line-height: 50px; }
.zcode { display: flex; height: 46px; margin-right: 10px; background: #2d2d2d; font: 22px/32px "DejaVu Sans Mono", monospace; }
.zcode span { width: 53px; text-align: right; padding-right: 6px; font-size: 20px; }
.zcode code { flex: 1; background: #121212; padding-left: 7px; font: 700 22px/32px "DejaVu Sans Mono", monospace; }
.notes { position: absolute; inset: 0; width: 100%; height: auto; pointer-events: none; }
```
